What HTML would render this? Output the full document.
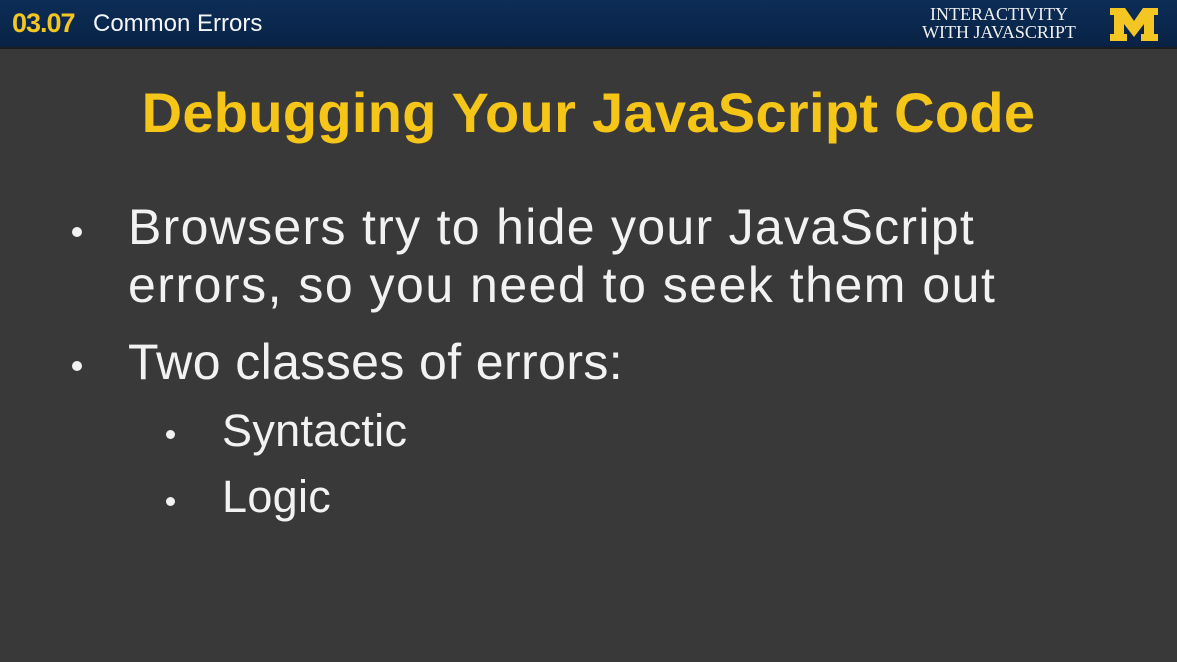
<!DOCTYPE html>
<html><head><meta charset="utf-8"><style>
body{margin:0;width:1177px;height:662px;overflow:hidden;background:#3a3939;font-family:"Liberation Sans",sans-serif;position:relative}
.hdr{position:absolute;left:0;top:0;width:1177px;height:47px;background:linear-gradient(#0d2d57,#082244);border-bottom:2px solid #1c1c1c}
.t{position:absolute;white-space:nowrap}
.b{position:absolute;color:#f2f2f2;font-size:50px;letter-spacing:1.3px;white-space:nowrap}
.dot{position:absolute;width:10px;height:10px;border-radius:50%;background:#f2f2f2}
</style></head><body>
<div class="hdr"></div>
<div class="t" style="left:12px;top:8px;font-size:27px;font-weight:bold;color:#f3c623;letter-spacing:-1px">03.07</div>
<div class="t" style="left:93px;top:10px;font-size:24px;color:#f4f6f8">Common Errors</div>
<div class="t" style="left:910px;top:5px;width:178px;text-align:center;font-family:'Liberation Serif',serif;font-size:18px;line-height:18px;color:#f0f0f0">INTERACTIVITY<br>WITH JAVASCRIPT</div>
<svg style="position:absolute;left:1110px;top:8px" width="48" height="33" viewBox="0 0 48 33"><polygon fill="#f3c623" points="0,0 15,0 24,13 33,0 48,0 48,7 44,7 44,26 48,26 48,33 31,33 31,26 34,26 34,16 24,29 14,16 14,26 17,26 17,33 0,33 0,26 4,26 4,7 0,7"/></svg>
<div class="t" style="left:0;width:1177px;text-align:center;top:80px;font-size:56px;font-weight:bold;color:#f5c518;letter-spacing:0.3px;box-sizing:border-box">Debugging Your JavaScript Code</div>
<div class="dot" style="left:72px;top:227px"></div>
<div class="b" style="left:128px;top:198px">Browsers try to hide your JavaScript</div>
<div class="b" style="left:128px;top:256px;letter-spacing:1.5px">errors, so you need to seek them out</div>
<div class="dot" style="left:72px;top:361px"></div>
<div class="b" style="left:128px;top:333px;letter-spacing:0.4px">Two classes of errors:</div>
<div class="dot" style="left:166px;top:430px;width:9px;height:9px"></div>
<div class="b" style="left:222px;top:405px;font-size:45px;letter-spacing:0.3px">Syntactic</div>
<div class="dot" style="left:166px;top:497px;width:9px;height:9px"></div>
<div class="b" style="left:222px;top:471px;font-size:45px;letter-spacing:0.3px">Logic</div>
</body></html>
